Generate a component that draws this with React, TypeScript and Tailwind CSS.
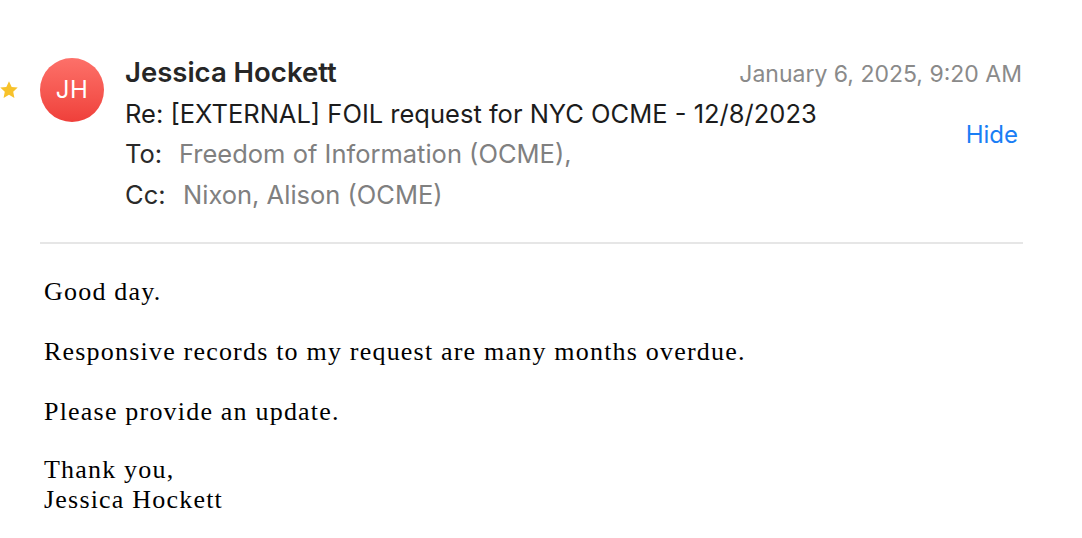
import React from 'react';

const sans = { fontFamily: 'Inter, "Liberation Sans", Arial, sans-serif' };
const serif = { fontFamily: '"Liberation Serif", "DejaVu Serif", serif' };

const Star: React.FC = () => (
  <svg width="22" height="22" viewBox="0 0 24 24" className="shrink-0">
    <path
      d="M12 2.5l2.9 6.1 6.6.8-4.9 4.6 1.3 6.6L12 17.3l-5.9 3.3 1.3-6.6-4.9-4.6 6.6-.8z"
      fill="#f7c22b"
    />
  </svg>
);

const EmailHeader: React.FC = () => (
  <div className="flex items-start whitespace-nowrap" style={sans}>
    <div className="w-[42px] shrink-0 pt-[27px] -ml-[12px]">
      <Star />
    </div>
    <div className="mt-[6px] w-[64px] h-[64px] rounded-full bg-gradient-to-b from-[#fd7069] to-[#ef3f3a] flex items-center justify-center shrink-0">
      <span className="text-white text-[24px] tracking-[0.5px]">JH</span>
    </div>
    <div className="ml-[21px] flex-1 min-w-0 flex flex-col pt-[1px]">
      {/* sender + date */}
      <div className="h-[40px] flex items-center justify-between">
        <span className="text-[27.5px] font-semibold text-[#262626]">Jessica Hockett</span>
        <span className="pt-[3px] text-[23px] text-[#8a8a8a]">January 6, 2025, 9:20 AM</span>
      </div>
      {/* subject + recipients, Hide on the right */}
      <div className="flex items-start justify-between">
        <div className="flex flex-col">
          <div className="h-[41px] pt-[1px] flex items-center text-[25.5px] text-[#1c1c1c]">
            Re: [EXTERNAL] FOIL request for NYC OCME - 12/8/2023
          </div>
          <div className="h-[40px] flex items-center text-[25.5px]">
            <span className="text-[#2a2a2a] w-[54px]">To:</span>
            <span className="text-[#808080]">Freedom of Information (OCME),</span>
          </div>
          <div className="h-[41px] pt-[1px] flex items-center text-[25.5px]">
            <span className="text-[#2a2a2a] w-[58px]">Cc:</span>
            <span className="text-[#808080]">Nixon, Alison (OCME)</span>
          </div>
        </div>
        <div className="h-[40px] mt-[22px] flex items-center text-[24px] text-[#1a7ef5] pr-[4px]">Hide</div>
      </div>
    </div>
  </div>
);

const App: React.FC = () => {
  return (
    <div className="w-[1082px] h-[538px] bg-white overflow-hidden">
      <div className="pl-[10px] pr-[60px] pt-[52px]">
        <EmailHeader />
      </div>
      <div className="ml-[40px] mr-[59px] mt-[27px] border-t-2 border-[#e6e6e6]" />
      <div className="pl-[44px] pt-[33px] text-[26px] tracking-[1.2px] text-black leading-[30px]" style={serif}>
        <p>Good day.</p>
        <p className="mt-[30px]">Responsive records to my request are many months overdue.</p>
        <p className="mt-[30px]">Please provide an update.</p>
        <p className="mt-[28px]">
          Thank you,
          <br />
          Jessica Hockett
        </p>
      </div>
    </div>
  );
};

export default App;
